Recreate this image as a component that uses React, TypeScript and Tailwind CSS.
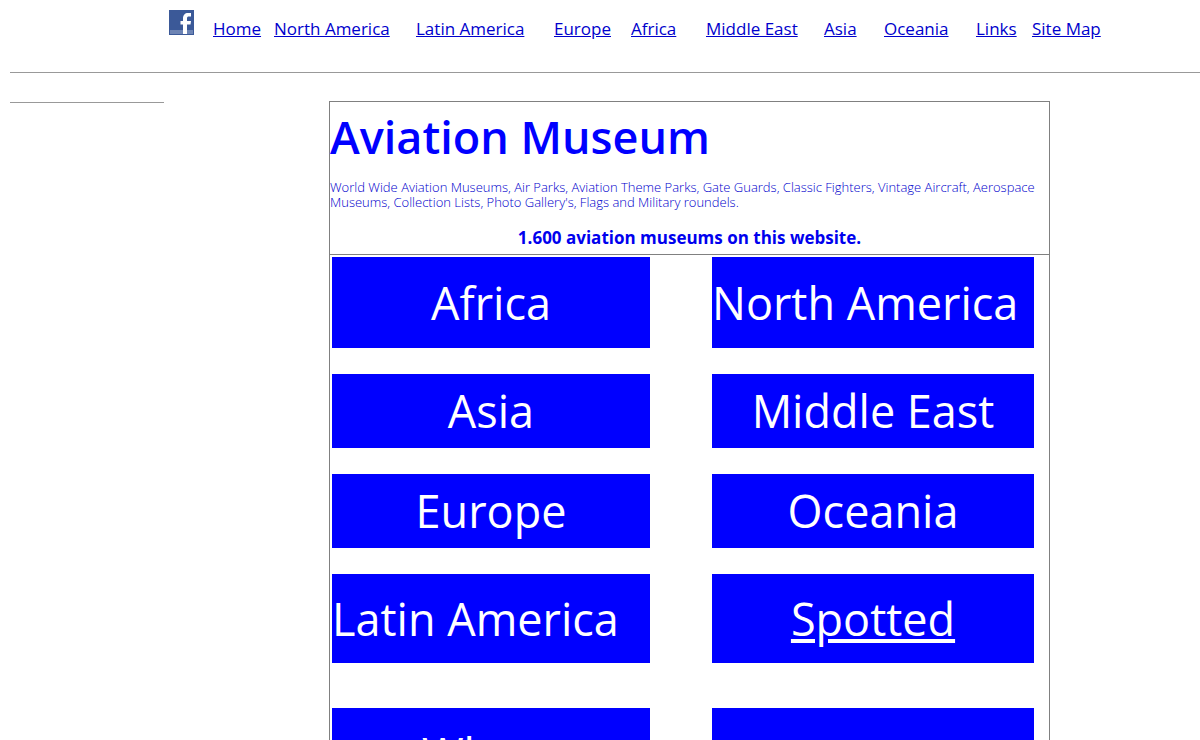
const links = [
	{ name: "Home", width: "w-[61px]" },
	{ name: "North America", width: "w-[142px]" },
	{ name: "Latin America", width: "w-[138px]" },
	{ name: "Europe", width: "w-[77px]" },
	{ name: "Africa", width: "w-[75px]" },
	{ name: "Middle East", width: "w-[118px]" },
	{ name: "Asia", width: "w-[60px]" },
	{ name: "Oceania", width: "w-[92px]" },
	{ name: "Links", width: "w-[56px]" },
	{ name: "Site Map", width: "w-[76px]" },
];

function FacebookIcon() {
	return (
		<svg width="25" height="25" viewBox="0 0 25 25" aria-hidden="true">
			<rect width="25" height="25" fill="#3b5998" />
			<rect x="1" y="20" width="23" height="4" fill="#6d84b4" />
			<path
				d="M14 24V14.500H11.500V11H14V8.500C14 5 16 3 19 3H22V6.500H19.800C18.600 6.500 18 7 18 8.500V11H22L21.500 14.500H18V24Z"
				fill="#ffffff"
			/>
		</svg>
	);
}

function Header() {
	return (
		<header className="pt-2.5 h-[72px] pl-[159px] flex items-start">
			<a href="#facebook" aria-label="Facebook" className="w-11 shrink-0">
				<FacebookIcon />
			</a>
			<nav className="pt-[7px]">
				<ul className="flex text-[17px] leading-6 whitespace-nowrap">
					{links.map((link) => (
						<li key={link.name} className={`${link.width} shrink-0`}>
							<a href="#" className="underline text-[#0000cc]">
								{link.name}
							</a>
						</li>
					))}
				</ul>
			</nav>
		</header>
	);
}

function Intro() {
	return (
		<div className="border-b border-[#808080] h-[153px] text-[#0000ff]">
			<h1 className="text-[45px] leading-[70px] font-semibold">Aviation Museum</h1>
			<p className="text-[13px] leading-[15px] pt-2 font-light text-[#0000cc] whitespace-nowrap">
				World Wide Aviation Museums, Air Parks, Aviation Theme Parks, Gate Guards, Classic Fighters, Vintage
				Aircraft, Aerospace
				<br />
				Museums, Collection Lists, Photo Gallery's, Flags and Military roundels.
			</p>
			<p className="text-[17px] leading-6 pt-4 text-center font-bold text-[#0000ee]">
				1.600 aviation museums on this website.
			</p>
		</div>
	);
}

function Regions() {
	return (
		<div className="grid grid-cols-[318fr_322fr] gap-x-[62px] pl-0.5 pr-[15px] pt-0.5 text-[45px] leading-[56px] font-medium text-white whitespace-nowrap">
			<a href="#" className="bg-[#0000ff] h-[91px] mb-[26px] flex items-center justify-center">Africa</a>
			<a href="#" className="bg-[#0000ff] h-[91px] mb-[26px] flex items-center">North America</a>

			<a href="#" className="bg-[#0000ff] h-[74px] mb-[26px] flex items-center justify-center">Asia</a>
			<a href="#" className="bg-[#0000ff] h-[74px] mb-[26px] flex items-center justify-center">Middle East</a>

			<a href="#" className="bg-[#0000ff] h-[74px] mb-[26px] flex items-center justify-center">Europe</a>
			<a href="#" className="bg-[#0000ff] h-[74px] mb-[26px] flex items-center justify-center">Oceania</a>

			<a href="#" className="bg-[#0000ff] h-[89px] mb-[45px] flex items-center">Latin America</a>
			<a href="#" className="bg-[#0000ff] h-[89px] mb-[45px] flex items-center justify-center underline">Spotted</a>

			<a href="#" className="bg-[#0000ff] h-[91px] flex items-center justify-center">Where</a>
			<div className="bg-[#0000ff] h-[91px]" />
		</div>
	);
}

function App() {
	return (
		<div className="bg-white pl-2.5 font-['Open_Sans',sans-serif]">
			<Header />
			<hr className="border-[#999999]" />
			<div className="flex">
				<aside className="w-[154px] shrink-0 pt-[29px]">
					<hr className="border-[#999999]" />
				</aside>
				<main className="grow flex justify-center pt-7 pl-[15px]">
					<div className="w-full max-w-[721px] border border-[#808080]">
						<Intro />
						<Regions />
					</div>
				</main>
			</div>
		</div>
	);
}

export default App;
